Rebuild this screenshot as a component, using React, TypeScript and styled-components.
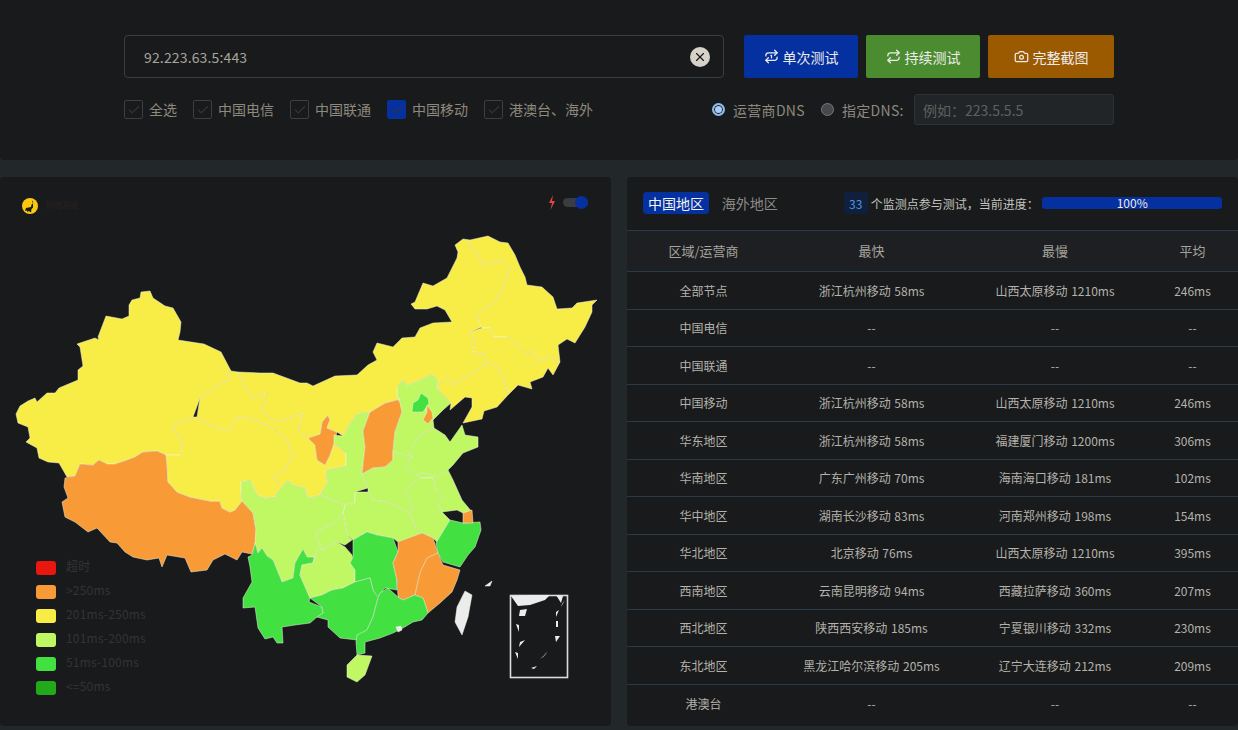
import styled, { createGlobalStyle } from "styled-components";
import { Camera, Check, Repeat, Repeat1, X } from "lucide-react";

const GlobalStyle = createGlobalStyle`
  html, body {
    margin: 0;
    background: #22272a;
    font-family: "Noto Sans CJK SC", "Noto Sans", sans-serif;
  }
`;

const Page = styled.div`
  width: 1238px;
  height: 730px;
  overflow: hidden;
  display: flex;
  flex-direction: column;
  gap: 17px;
`;

const TopPanel = styled.div`
  height: 160px;
  box-sizing: border-box;
  padding: 35px 124px 0;
  background: #191a1c;
  border-radius: 0 0 4px 4px;
`;

const SearchRow = styled.div`
  display: flex;
  gap: 8px;
  height: 43px;
`;

const SearchBox = styled.div`
  flex: none;
  width: 600px;
  box-sizing: border-box;
  display: flex;
  align-items: center;
  justify-content: space-between;
  padding: 0 13px 0 19px;
  margin-right: 12px;
  border: 1px solid #3b3d40;
  border-radius: 4px;
  color: #a8a59c;
  font-size: 14px;
  letter-spacing: 0.15px;
`;

const ClearIcon = styled.span`
  width: 20px;
  height: 20px;
  border-radius: 50%;
  background: #d6d1c9;
  color: #1a1a1a;
  display: flex;
  align-items: center;
  justify-content: center;
`;

const ActionButton = styled.button<{ $bg: string; $width: number }>`
  flex: none;
  width: ${(p) => p.$width}px;
  display: flex;
  align-items: center;
  justify-content: center;
  gap: 4px;
  padding: 0;
  border: none;
  border-radius: 2px;
  background: ${(p) => p.$bg};
  color: #ececec;
  font-family: inherit;
  font-size: 14px;
`;

const OptionRow = styled.div`
  display: flex;
  align-items: center;
  margin-top: 16px;
  height: 31px;
  color: #8d897c;
  font-size: 14px;
`;

const CheckItem = styled.label`
  display: flex;
  align-items: center;
  gap: 6px;
  margin-right: 16px;
  line-height: 18px;
`;

const CheckLabel = styled.span`
  margin-top: -2px;
`;

const CheckBox = styled.span<{ $on?: boolean }>`
  width: 19px;
  height: 19px;
  box-sizing: border-box;
  display: flex;
  align-items: center;
  justify-content: center;
  border-radius: 2px;
  border: 1px solid ${(p) => (p.$on ? "#0530a0" : "#3c3e41")};
  background: ${(p) => (p.$on ? "#0530a0" : "transparent")};
  color: #33363a;
`;

const DnsGroup = styled.div`
  margin-left: auto;
  display: flex;
  align-items: center;
`;

const RadioDot = styled.span<{ $on?: boolean }>`
  width: 13px;
  height: 13px;
  box-sizing: border-box;
  border-radius: 50%;
  margin-right: 8px;
  border: ${(p) => (p.$on ? "2px solid #8fbdf0" : "1px solid #77797c")};
  background: ${(p) => (p.$on ? "#a8cdf8" : "#46484b")};
  box-shadow: ${(p) => (p.$on ? "inset 0 0 0 1px #191a1c" : "none")};
`;

const DnsLabel = styled.span<{ $width: number; $gap: number }>`
  width: ${(p) => p.$width}px;
  margin-right: ${(p) => p.$gap}px;
  white-space: nowrap;
  letter-spacing: 0.3px;
`;

const DnsInput = styled.div`
  width: 200px;
  height: 31px;
  box-sizing: border-box;
  display: flex;
  align-items: center;
  padding-left: 8px;
  background: #222527;
  border: 1px solid #2f3235;
  border-radius: 3px;
  color: #5f6061;
  font-size: 14px;
`;

const Columns = styled.div`
  display: grid;
  grid-template-columns: 611px 611px;
  gap: 16px;
`;

const MapPanel = styled.div`
  position: relative;
  height: 549px;
  background: #191a1c;
  border-radius: 4px;
`;

const MapSvg = styled.svg`
  display: block;
  width: 611px;
  height: 549px;
`;

const LogoIcon = styled.svg`
  position: absolute;
  left: 22px;
  top: 21px;
  width: 16px;
  height: 16px;
`;

const LogoName = styled.span`
  position: absolute;
  left: 46px;
  top: 22px;
  color: #2a2320;
  font-size: 8px;
`;

const Bolt = styled.svg`
  position: absolute;
  left: 547px;
  top: 18px;
  width: 10px;
  height: 15px;
`;

const SwitchTrack = styled.span`
  position: absolute;
  left: 563px;
  top: 21px;
  width: 25px;
  height: 9px;
  border-radius: 5px;
  background: #3a3c40;
`;

const SwitchKnob = styled.span`
  position: absolute;
  right: 0;
  top: -2px;
  width: 13px;
  height: 13px;
  border-radius: 50%;
  background: #0530a0;
`;

const Legend = styled.ul`
  position: absolute;
  left: 36px;
  top: 384px;
  margin: 0;
  padding: 0;
  list-style: none;
  display: flex;
  flex-direction: column;
  gap: 10px;
`;

const LegendRow = styled.li`
  display: flex;
  align-items: center;
  gap: 10px;
  height: 14px;
  color: #333436;
  font-size: 12px;
  letter-spacing: 0.2px;
`;

const LegendText = styled.span`
  margin-top: -5px;
`;

const LegendSwatch = styled.span<{ $color: string }>`
  width: 20px;
  height: 14px;
  border-radius: 3px;
  background: ${(p) => p.$color};
`;

const TablePanel = styled.div`
  height: 549px;
  background: #191a1c;
  border-radius: 4px;
  display: flex;
  flex-direction: column;
`;

const TabBar = styled.div`
  height: 54px;
  box-sizing: border-box;
  display: flex;
  align-items: center;
  padding: 0 16px 1px;
  border-bottom: 1px solid #2b3a47;
`;

const Tab = styled.span<{ $on?: boolean }>`
  width: 66px;
  height: 22px;
  margin-right: 8px;
  display: flex;
  align-items: center;
  justify-content: center;
  border-radius: 4px;
  background: ${(p) => (p.$on ? "#0530a0" : "transparent")};
  color: ${(p) => (p.$on ? "#f2f2f2" : "#8b8b86")};
  font-size: 14px;
`;

const CountBadge = styled.span`
  width: 24px;
  height: 22px;
  margin-left: 53px;
  display: flex;
  align-items: center;
  justify-content: center;
  border-radius: 3px;
  background: #0f1f3c;
  color: #4b93e6;
  font-size: 12px;
`;

const ProgressText = styled.span`
  margin-left: 3px;
  width: 172px;
  color: #c4c2bc;
  font-size: 12px;
`;

const ProgressBar = styled.div`
  width: 180px;
  height: 12px;
  border-radius: 3px;
  background: #0530a0;
  color: #ececec;
  font-size: 12px;
  line-height: 12px;
  text-align: center;
`;

const Row = styled.div<{ $head?: boolean }>`
  display: grid;
  grid-template-columns: 153px 183px 184px 91px;
  align-items: center;
  justify-items: center;
  box-sizing: border-box;
  height: ${(p) => (p.$head ? "41px" : "37.5px")};
  padding-bottom: ${(p) => (p.$head ? "2px" : "0")};
  background: ${(p) => (p.$head ? "#1d1f22" : "transparent")};
  border-bottom: 1px solid #2b3a47;
  color: ${(p) => (p.$head ? "#a5a39c" : "#b4b2ab")};
  font-size: ${(p) => (p.$head ? "13px" : "12px")};
  word-spacing: 1px;

  &:last-child {
    border-bottom: none;
  }
`;

type Region = { color: string; points: string };

const YELLOW = "#f8ec47";
const ORANGE = "#f89a36";
const LIME = "#bff863";
const GREEN = "#42e041";
const WHITE = "#ececec";

const regions: Region[] = [
  { color: YELLOW, points: "141,292 150,291 153,298 165,306 173,308 181,322 180,332 178,340 204,344 221,352 231,371 227,373 229,380 220,384 208,393 200,398 193,417 173,425 175,432 183,442 180,455 166,455 157,451 143,452 135,457 127,460 115,464 107,464 99,460 93,465 80,464 75,476 67,477 59,463 48,462 39,458 37,448 26,442 30,438 28,427 18,423 16,414 20,406 28,401 35,398 37,402 47,393 55,393 59,388 78,380 78,370 83,366 80,347 77,344 95,338 99,340 98,337 106,316 122,319 129,316 129,305 132,300 140,298" },
  { color: ORANGE, points: "166,455 167,463 168,482 177,492 190,497 210,501 220,501 222,508 230,512 235,510 242,501 253,513 256,530 256,542 252,554 247,553 242,552 237,560 225,554 213,560 207,570 191,572 185,558 167,555 162,567 159,558 147,560 133,557 125,552 117,543 110,542 97,528 88,532 75,522 65,517 62,502 68,498 64,487 65,478 75,476 80,464 93,465 99,460 107,464 115,464 127,460 135,457 143,452 157,451" },
  { color: YELLOW, points: "173,425 193,417 197,417 213,427 230,430 237,417 253,419 273,428 287,440 293,455 285,470 273,477 282,487 277,492 275,497 265,498 257,495 250,480 241,482 241,492 242,501 235,510 230,512 222,508 220,501 210,501 190,497 177,492 168,482 167,463 166,455 180,455 183,442 175,432" },
  { color: YELLOW, points: "231,371 238,372 245,387 252,398 265,393 266,402 260,409 273,420 278,422 303,413 298,430 308,438 315,445 317,460 325,465 330,455 334,443 346,453 346,466 326,470 327,483 320,495 308,498 305,488 293,485 288,480 282,487 273,477 285,470 293,455 287,440 273,428 253,419 237,417 230,430 213,427 197,417 200,398 208,393 220,384 229,380 227,373" },
  { color: ORANGE, points: "308,438 320,434 322,422 328,415 330,420 327,428 337,432 334,443 330,455 325,465 317,460 315,445" },
  { color: LIME, points: "334,435 343,436 350,423 358,413 370,412 363,431 365,447 362,474 368,488 355,492 355,503 345,505 320,495 327,483 326,470 346,466 346,453 334,443" },
  { color: ORANGE, points: "400,399 402,412 395,432 393,452 393,460 385,467 373,468 362,474 365,447 363,431 370,412 385,403" },
  { color: LIME, points: "397,387 403,380 407,385 420,380 432,374 438,380 437,388 451,403 443,410 433,420 434,428 420,435 410,450 412,457 393,452 395,432 402,412 400,403 397,397" },
  { color: GREEN, points: "421,393 428,398 429,403 423,412 412,412 413,403 418,400" },
  { color: ORANGE, points: "427,405 432,412 433,418 428,424 423,420 427,412" },
  { color: LIME, points: "410,450 420,435 434,428 445,435 450,442 462,425 465,435 478,437 478,447 463,453 453,465 448,470 438,477 423,473 417,475 405,467 412,457" },
  { color: LIME, points: "362,474 373,468 385,467 393,460 393,452 412,457 405,467 417,475 422,478 412,483 405,492 413,507 410,513 397,507 387,502 373,500 368,492 368,488" },
  { color: LIME, points: "448,470 453,480 462,500 472,512 463,513 457,510 442,512 438,503 443,497 437,492 433,478 422,478 417,475 423,473 438,477" },
  { color: LIME, points: "422,478 433,478 437,492 443,497 438,503 442,512 450,520 437,542 433,538 422,533 415,527 410,513 413,507 405,492 412,483" },
  { color: LIME, points: "355,492 368,492 373,500 387,502 397,507 410,513 415,527 422,533 398,542 393,538 377,535 367,532 353,540 347,535 343,513 345,505 355,503" },
  { color: LIME, points: "345,505 343,513 335,523 318,530 315,537 323,550 337,542 345,545 352,540 347,535 343,513" },
  { color: LIME, points: "241,482 250,480 257,495 265,498 275,497 277,492 282,487 288,480 293,485 305,488 308,498 320,495 345,505 343,513 335,523 318,530 315,537 323,550 318,548 313,563 314,557 307,557 303,549 295,563 293,578 282,582 273,560 267,556 262,548 258,553 255,543 256,530 253,513 242,501 241,492" },
  { color: GREEN, points: "255,543 258,553 262,548 267,556 273,560 282,582 293,578 295,563 303,549 307,557 314,557 313,563 302,565 300,575 310,598 309,602 322,607 323,613 317,617 310,623 295,625 282,627 283,643 277,643 273,637 265,639 258,628 255,607 243,608 243,598 252,582 250,567 248,557 252,555" },
  { color: LIME, points: "302,565 313,563 318,548 323,550 337,542 345,547 352,555 355,570 355,582 343,588 332,590 322,595 310,598 300,575" },
  { color: GREEN, points: "353,540 367,532 377,535 393,538 398,552 393,563 397,580 397,590 385,588 378,597 373,590 370,578 355,582 355,570 350,563 353,557" },
  { color: ORANGE, points: "398,542 422,533 433,538 438,553 427,558 420,573 415,595 403,600 398,597 397,580 393,563 398,552" },
  { color: ORANGE, points: "438,553 443,565 460,570 457,580 452,592 440,603 428,613 423,598 415,595 420,573 427,558" },
  { color: GREEN, points: "436,543 450,520 463,523 480,522 481,530 475,547 468,555 460,567 443,562 438,553" },
  { color: ORANGE, points: "463,513 472,510 473,523 463,523" },
  { color: GREEN, points: "310,598 322,595 332,590 343,588 355,582 370,578 373,590 378,598 373,617 367,630 357,640 340,638 328,627 328,620 317,617 323,613 322,607" },
  { color: GREEN, points: "380,593 388,588 398,597 403,600 415,595 423,598 428,613 422,620 413,622 403,628 393,633 380,638 365,642 365,653 357,655 356,642 357,635 367,630 373,617 378,598" },
  { color: LIME, points: "357,655 372,656 365,675 357,682 347,677 347,665" },
  { color: YELLOW, points: "238,372 260,373 273,373 300,383 307,383 313,386 335,376 357,375 368,365 377,360 373,352 377,343 393,347 402,338 415,337 420,328 433,323 452,322 445,310 437,306 427,309 415,309 411,304 415,302 423,283 433,286 447,278 457,258 458,252 455,245 463,239 470,240 467,245 477,252 483,265 502,260 510,268 502,290 497,300 476,315 482,327 470,332 475,343 473,352 483,353 487,363 477,370 453,385 447,377 437,388 438,380 432,374 420,380 407,385 403,380 397,387 397,397 400,399 385,403 370,412 358,413 350,423 343,436 337,432 327,428 330,420 328,415 322,422 320,434 308,438 298,430 303,413 278,422 273,420 260,409 266,402 265,393 252,398 245,387" },
  { color: YELLOW, points: "470,240 488,236 500,242 508,243 515,255 520,267 525,277 527,285 542,287 553,297 557,309 572,308 577,303 597,300 592,305 592,312 585,327 575,343 567,339 558,345 560,362 548,357 537,362 533,350 527,355 520,347 507,337 493,337 490,328 482,328 476,315 497,300 502,290 510,268 502,260 483,265 477,252 467,245" },
  { color: YELLOW, points: "482,328 490,328 493,337 507,337 520,347 527,355 533,350 537,362 548,357 560,362 553,375 548,368 543,377 530,382 532,389 518,385 508,395 504,380 497,367 487,363 483,353 473,352 475,343 470,332" },
  { color: YELLOW, points: "487,363 497,367 504,380 508,395 497,407 484,411 482,419 463,423 472,407 472,398 465,397 450,410 451,403 437,388 447,377 453,385 477,370" },
  { color: WHITE, points: "465,591 472,595 468,617 462,635 455,622 457,607" },
  { color: WHITE, points: "485,586 492,581 490,586" },
  { color: WHITE, points: "396,627 401,626 402,630 398,632" },
];

const islands = [
  "511,596 530,595 550,595 545,600 530,605 518,606",
  "520,610 527,609 525,616 519,616",
  "516,624 519,625 519,632",
  "556,595 563,596 561,603",
  "565,600 562,604 561,607",
  "556,612 559,610 556,617",
  "556,621 558,621 558,627 556,627",
  "555,636 560,636 556,642",
  "520,642 525,640 519,647",
  "515,652 518,653 518,659",
  "545,654 547,651 543,658",
  "548,652 543,657 540,659",
  "531,668 537,666 534,669",
];

const legendItems = [
  { color: "#e8170f", label: "超时" },
  { color: ORANGE, label: ">250ms" },
  { color: YELLOW, label: "201ms-250ms" },
  { color: LIME, label: "101ms-200ms" },
  { color: GREEN, label: "51ms-100ms" },
  { color: "#22aa1a", label: "<=50ms" },
];

const checks = [
  { label: "全选" },
  { label: "中国电信" },
  { label: "中国联通" },
  { label: "中国移动", on: true },
  { label: "港澳台、海外" },
];

const rows = [
  ["全部节点", "浙江杭州移动 58ms", "山西太原移动 1210ms", "246ms"],
  ["中国电信", "--", "--", "--"],
  ["中国联通", "--", "--", "--"],
  ["中国移动", "浙江杭州移动 58ms", "山西太原移动 1210ms", "246ms"],
  ["华东地区", "浙江杭州移动 58ms", "福建厦门移动 1200ms", "306ms"],
  ["华南地区", "广东广州移动 70ms", "海南海口移动 181ms", "102ms"],
  ["华中地区", "湖南长沙移动 83ms", "河南郑州移动 198ms", "154ms"],
  ["华北地区", "北京移动 76ms", "山西太原移动 1210ms", "395ms"],
  ["西南地区", "云南昆明移动 94ms", "西藏拉萨移动 360ms", "207ms"],
  ["西北地区", "陕西西安移动 185ms", "宁夏银川移动 332ms", "230ms"],
  ["东北地区", "黑龙江哈尔滨移动 205ms", "辽宁大连移动 212ms", "209ms"],
  ["港澳台", "--", "--", "--"],
];

export default function App() {
  return (
    <Page>
      <GlobalStyle />
      <TopPanel>
        <SearchRow>
          <SearchBox>
            92.223.63.5:443
            <ClearIcon>
              <X size={14} strokeWidth={2} />
            </ClearIcon>
          </SearchBox>
          <ActionButton $bg="#0530a0" $width={114}>
            <Repeat1 size={15} /> 单次测试
          </ActionButton>
          <ActionButton $bg="#4c8c30" $width={114}>
            <Repeat size={15} /> 持续测试
          </ActionButton>
          <ActionButton $bg="#9c5a00" $width={126}>
            <Camera size={15} /> 完整截图
          </ActionButton>
        </SearchRow>
        <OptionRow>
          {checks.map((c) => (
            <CheckItem key={c.label}>
              <CheckBox $on={c.on}>
                <Check size={14} strokeWidth={2} />
              </CheckBox>
              <CheckLabel>{c.label}</CheckLabel>
            </CheckItem>
          ))}
          <DnsGroup>
            <RadioDot $on />
            <DnsLabel $width={72} $gap={16}>运营商DNS</DnsLabel>
            <RadioDot />
            <DnsLabel $width={64} $gap={8}>指定DNS:</DnsLabel>
            <DnsInput>例如：223.5.5.5</DnsInput>
          </DnsGroup>
        </OptionRow>
      </TopPanel>
      <Columns>
        <MapPanel>
          <MapSvg viewBox="0 177 611 549">
            {regions.map((r, i) => (
              <polygon
                key={i}
                points={r.points}
                fill={r.color}
                stroke="#f4f4e8"
                strokeOpacity={0.7}
                strokeWidth={0.7}
                strokeLinejoin="round"
              />
            ))}
            <rect x={510.5} y={595.5} width={57} height={82} fill="none" stroke="#dcdcdc" strokeWidth={1.6} />
            {islands.map((p) => (
              <polygon key={p} points={p} fill={WHITE} />
            ))}
          </MapSvg>
          <LogoIcon viewBox="0 0 16 16">
            <circle cx={8} cy={8} r={8} fill="#fbc90f" />
            <path d="M11 2.5 L10 4 L11.5 5 L9.5 6.5 L9 9 L4 10 L3 13 L5 12.5 L5.5 14 L7 13 L9 14.5 L9.5 11 L11 9.5 Z" fill="#191a1c" />
          </LogoIcon>
          <LogoName>网络测速</LogoName>
          <Bolt viewBox="0 0 10 15">
            <path d="M6 0 L2 8 L5 8 L3.5 15 L8 6 L5 6 Z" fill="#e04545" />
          </Bolt>
          <SwitchTrack>
            <SwitchKnob />
          </SwitchTrack>
          <Legend>
            {legendItems.map((l) => (
              <LegendRow key={l.label}>
                <LegendSwatch $color={l.color} />
                <LegendText>{l.label}</LegendText>
              </LegendRow>
            ))}
          </Legend>
        </MapPanel>
        <TablePanel>
          <TabBar>
            <Tab $on>中国地区</Tab>
            <Tab>海外地区</Tab>
            <CountBadge>33</CountBadge>
            <ProgressText>个监测点参与测试，当前进度：</ProgressText>
            <ProgressBar>100%</ProgressBar>
          </TabBar>
          <Row $head>
            <span>区域/运营商</span>
            <span>最快</span>
            <span>最慢</span>
            <span>平均</span>
          </Row>
          {rows.map((r) => (
            <Row key={r[0]}>
              {r.map((cell, j) => (
                <span key={j}>{cell}</span>
              ))}
            </Row>
          ))}
        </TablePanel>
      </Columns>
    </Page>
  );
}
